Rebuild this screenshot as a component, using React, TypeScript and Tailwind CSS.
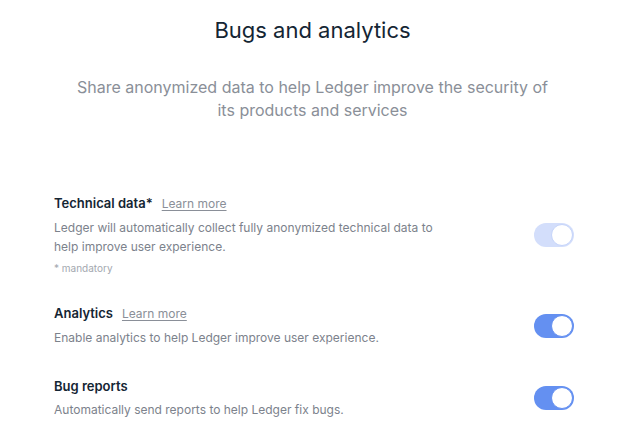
import React from "react";

function Toggle({ disabled }: { disabled?: boolean }) {
  return (
    <div
      className={`relative h-[24px] w-[40px] shrink-0 rounded-full ${
        disabled ? "bg-[#d3defb]" : "bg-[#6490f1]"
      }`}
    >
      <div
        className={`absolute right-[1px] top-[1px] h-[22px] w-[22px] rounded-full border bg-white ${
          disabled ? "border-[#c5d4fa]" : "border-[#6490f1]"
        }`}
      />
    </div>
  );
}

function Row({
  title,
  learn,
  desc,
  mandatory,
  disabled,
  className,
}: {
  title: string;
  learn?: boolean;
  desc: React.ReactNode;
  mandatory?: boolean;
  disabled?: boolean;
  className?: string;
}) {
  return (
    <div className={`flex items-center justify-between ${className ?? ""}`}>
      <div className="w-[400px]">
        <div className="flex items-baseline gap-[9px]">
          <span className="text-[13px] font-semibold leading-[18px] text-[#142533]">
            {title}
          </span>
          {learn && (
            <span className="text-[12px] leading-[18px] text-[#8a8f98] underline underline-offset-2">
              Learn more
            </span>
          )}
        </div>
        <div className="mt-[5px] text-[12px] leading-[19px] text-[#7c828c]">
          {desc}
        </div>
        {mandatory && (
          <div className="mt-[5px] text-[10px] leading-[14px] text-[#a3a8af]">
            * mandatory
          </div>
        )}
      </div>
      <Toggle disabled={disabled} />
    </div>
  );
}

export default function App() {
  return (
    <div
      className="h-[437px] w-[625px] bg-white"
      style={{ fontFamily: "Inter, 'Noto Sans', sans-serif" }}
    >
      <div className="pt-[16px] text-center text-[22px] leading-[28px] text-[#142533]">
        Bugs and analytics
      </div>
      <div className="mx-auto mt-[32px] w-[480px] text-center text-[16px] leading-[23px] text-[#8a8f98]">
        Share anonymized data to help Ledger improve the security of its
        products and services
      </div>
      <div className="mt-[72px] pl-[54px] pr-[51px]">
        <Row
          title="Technical data*"
          learn
          mandatory
          disabled
          desc={
            <>
              Ledger will automatically collect fully anonymized technical data to
              <br />
              help improve user experience.
            </>
          }
        />
        <Row
          className="mt-[29px]"
          title="Analytics"
          learn
          desc="Enable analytics to help Ledger improve user experience."
        />
        <Row
          className="mt-[30px]"
          title="Bug reports"
          desc="Automatically send reports to help Ledger fix bugs."
        />
      </div>
    </div>
  );
}
